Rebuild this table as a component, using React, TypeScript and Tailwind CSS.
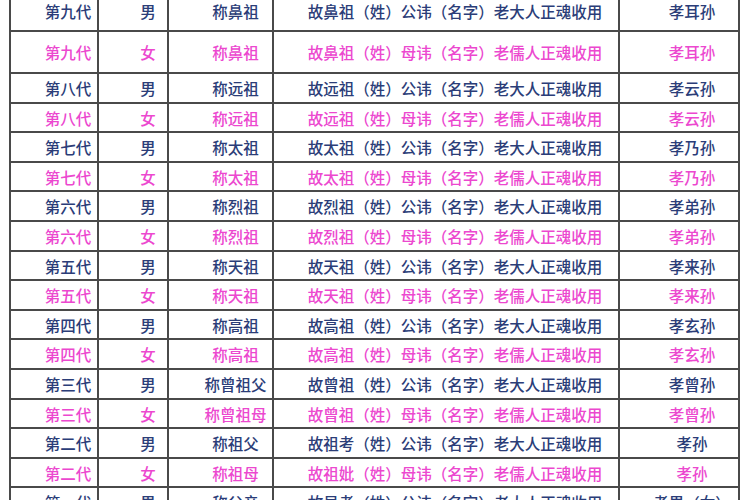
type Row = {
  gen: string;
  sex: '男' | '女';
  title: string;
  tablet: string;
  son: string;
};

const male = (gen: string, title: string, name: string, son: string): Row => ({
  gen,
  sex: '男',
  title,
  tablet: `${name}（姓）公讳（名字）老大人正魂收用`,
  son,
});

const female = (gen: string, title: string, name: string, son: string): Row => ({
  gen,
  sex: '女',
  title,
  tablet: `${name}（姓）母讳（名字）老儒人正魂收用`,
  son,
});

const rows: Row[] = [
  male('第九代', '称鼻祖', '故鼻祖', '孝耳孙'),
  female('第九代', '称鼻祖', '故鼻祖', '孝耳孙'),
  male('第八代', '称远祖', '故远祖', '孝云孙'),
  female('第八代', '称远祖', '故远祖', '孝云孙'),
  male('第七代', '称太祖', '故太祖', '孝乃孙'),
  female('第七代', '称太祖', '故太祖', '孝乃孙'),
  male('第六代', '称烈祖', '故烈祖', '孝弟孙'),
  female('第六代', '称烈祖', '故烈祖', '孝弟孙'),
  male('第五代', '称天祖', '故天祖', '孝来孙'),
  female('第五代', '称天祖', '故天祖', '孝来孙'),
  male('第四代', '称高祖', '故高祖', '孝玄孙'),
  female('第四代', '称高祖', '故高祖', '孝玄孙'),
  male('第三代', '称曾祖父', '故曾祖', '孝曾孙'),
  female('第三代', '称曾祖母', '故曾祖', '孝曾孙'),
  male('第二代', '称祖父', '故祖考', '孝孙'),
  female('第二代', '称祖母', '故祖妣', '孝孙'),
  male('第一代', '称父亲', '故显考', '孝男（女）'),
];

const heightFor = (i: number) => {
  if (i === 0) return 'h-[41px]';
  if (i === 1) return 'h-[42px]';
  return 'h-[29.6px]';
};

export default function App() {
  return (
    <div
      className="w-[750px] h-[500px] overflow-hidden bg-white"
      style={{ fontFamily: '"Noto Sans CJK SC", "Noto Sans", sans-serif' }}
    >
      <table className="ml-[9px] -mt-[11px] w-[731px] table-fixed border-collapse text-[15.5px] font-medium leading-none">
        <colgroup>
          <col className="w-[88px]" />
          <col className="w-[70px]" />
          <col className="w-[105px]" />
          <col className="w-[346px]" />
          <col className="w-[120px]" />
        </colgroup>
        <tbody>
          {rows.map((row, i) => {
            const color = row.sex === '男' ? 'text-[#2b3d78]' : 'text-[#ec48cf]';
            const cell = `border-2 border-[#4a4a4a] text-center whitespace-nowrap ${color}`;
            return (
              <tr key={i} className={heightFor(i)}>
                <td className={`${cell} pl-[28px] pt-[2px]`}>{row.gen}</td>
                <td className={`${cell} pl-[30px] pt-[2px]`}>{row.sex}</td>
                <td className={`${cell} pl-[30px] pt-[2px]`}>{row.title}</td>
                <td className={`${cell} pl-[18px] pt-[2px]`}>{row.tablet}</td>
                <td className={`${cell} pl-[26px] pt-[2px]`}>{row.son}</td>
              </tr>
            );
          })}
        </tbody>
      </table>
    </div>
  );
}
